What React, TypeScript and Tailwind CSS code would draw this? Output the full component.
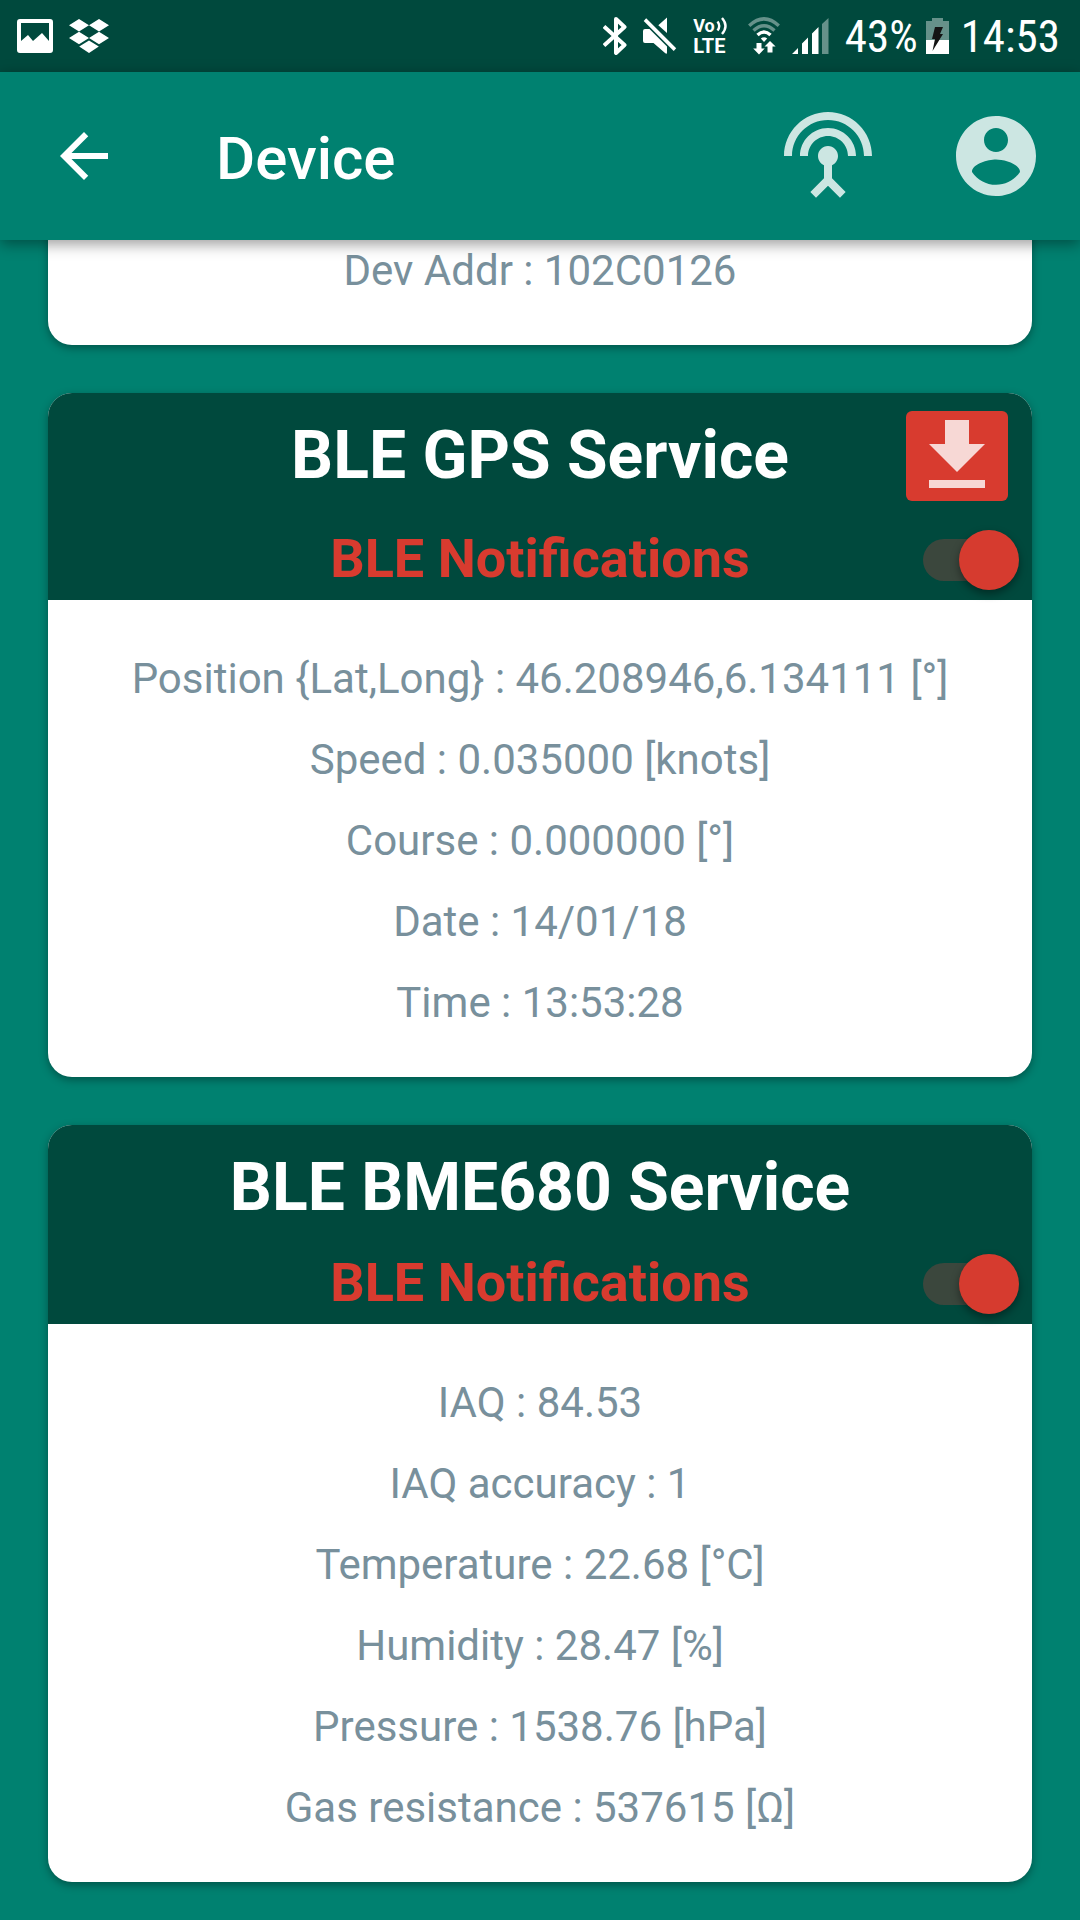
import type { ReactNode } from "react";

function PictureIcon() {
  return (
    <svg width="36" height="34" viewBox="0 0 36 34" aria-hidden="true">
      <path
        fill="#fff"
        fillRule="evenodd"
        d="M3 0h30a3 3 0 0 1 3 3v28a3 3 0 0 1-3 3H3a3 3 0 0 1-3-3V3a3 3 0 0 1 3-3zM4 4v18l7-6 5 6 9-8 7 8V4z"
      />
    </svg>
  );
}

function DropboxIcon() {
  return (
    <svg width="40" height="34" viewBox="0 0 40 34" aria-hidden="true">
      <path
        fill="#fff"
        d="M10 0l10 6.2-10 6.3L0 6.2zM30 0l10 6.2-10 6.3-10-6.3zM10 12.7l10 6.3-10 6.3L0 19zM30 12.7L40 19l-10 6.3L20 19zM20 21.4l9.8 6.2L20 34l-9.8-6.4z"
      />
    </svg>
  );
}

function BluetoothIcon() {
  return (
    <svg width="24" height="38" viewBox="0 0 24 38" aria-hidden="true">
      <path
        fill="none"
        stroke="#fff"
        strokeWidth="4"
        strokeLinejoin="round"
        d="M1 9.5L21.5 28 13 36V2l8.5 8L1 28.5"
      />
    </svg>
  );
}

function MuteIcon() {
  return (
    <svg width="34" height="38" viewBox="0 0 34 38" aria-hidden="true">
      <path
        fill="#fff"
        d="M2 12H6.500L24 29.500V35.500Q24 37.500 22.300 36.300L10.500 26H2Q0 26 0 24V14Q0 12 2 12zM24 0.500V16L15.300 8.200z"
      />
      <path fill="#fff" d="M3.200 1.200L33.200 31.200 30.700 34 0.700 4z" />
    </svg>
  );
}

function VoLte() {
  return (
    <div className="flex flex-col text-[20px] leading-[20px] font-bold">
      <div className="flex items-center gap-px text-[18px]">
        <span>Vo</span>
        <svg width="12" height="18" viewBox="0 0 12 18" aria-hidden="true">
          <path
            fill="none"
            stroke="#fff"
            strokeWidth="2.400"
            d="M1.500 4.500Q5 9 1.500 13.500M6 1Q13 9 6 17"
          />
        </svg>
      </div>
      <span>LTE</span>
    </div>
  );
}

function WifiIcon() {
  return (
    <svg width="32" height="38" viewBox="0 0 32 38" aria-hidden="true">
      <g fill="none" stroke="#fff" strokeWidth="3.400">
        <path opacity=".4" d="M1.200 8.800Q16-5 30.800 8.800" />
        <path opacity=".4" d="M5.500 13.500Q16 4 26.500 13.500" />
        <path d="M9.500 18Q16 12 22.500 18" />
      </g>
      <path
        fill="#fff"
        d="M12.800 21.500Q16 19 19.200 21.500L16 25zM8.500 26h5v5.500h3.200L11 37.500 5.200 31.500h3.300zM19.500 35.500V29.500H16.500L22 24l5.600 5.500H24.500v6z"
      />
    </svg>
  );
}

function SignalIcon() {
  return (
    <svg width="37" height="36" viewBox="0 0 37 36" aria-hidden="true">
      <path
        fill="#fff"
        d="M0 36l6-6v6zM10 25.500l6-6V36h-6zM20 15.500l6.500-6.500v27H20z"
      />
      <path fill="#fff" opacity=".4" d="M30 6l6.500-6v36H30z" />
    </svg>
  );
}

function BatteryIcon() {
  return (
    <svg width="23" height="36" viewBox="0 0 23 36" aria-hidden="true">
      <path fill="#fff" opacity=".4" d="M6 0h11v3h6v19H0V3h6z" />
      <path fill="#fff" d="M0 22h23v14H0z" />
      <path fill="#141414" d="M9 9h8l-3 7h3L6.500 33 9 21H6z" />
    </svg>
  );
}

function MaterialIcon({ path, className }: { path: string; className: string }) {
  return (
    <svg viewBox="0 0 24 24" className={className} fill="currentColor" aria-hidden="true">
      <path d={path} />
    </svg>
  );
}

const BACK = "M20 11H7.830l5.590-5.590L12 4l-8 8 8 8 1.410-1.410L7.830 13H20v-2z";
const ANTENNA =
  "M12 5c-3.870 0-7 3.130-7 7h2c0-2.760 2.240-5 5-5s5 2.240 5 5h2c0-3.870-3.130-7-7-7zm1 9.290c.88-.39 1.500-1.260 1.500-2.290 0-1.380-1.120-2.500-2.500-2.500S9.500 10.620 9.500 12c0 1.020.62 1.900 1.500 2.290v3.300L7.590 21 9 22.410l3-3 3 3L16.410 21 13 17.590v-3.300zM12 1C5.930 1 1 5.930 1 12h2c0-4.970 4.030-9 9-9s9 4.030 9 9h2c0-6.070-4.930-11-11-11z";
const ACCOUNT =
  "M12 2C6.480 2 2 6.480 2 12s4.480 10 10 10 10-4.480 10-10S17.520 2 12 2zm0 3c1.660 0 3 1.340 3 3s-1.340 3-3 3-3-1.340-3-3 1.340-3 3-3zm0 14.200c-2.500 0-4.710-1.280-6-3.220.03-1.990 4-3.080 6-3.080 1.990 0 5.970 1.090 6 3.080-1.290 1.940-3.500 3.220-6 3.220z";
const DOWNLOAD = "M19 9h-4V3H9v6H5l7 7 7-7zM5 18v2h14v-2H5z";

function StatusBar() {
  return (
    <div className="flex h-[72px] items-center justify-between bg-[#00493d] pr-5 pl-[17px] text-white">
      <div className="flex items-center gap-4">
        <PictureIcon />
        <DropboxIcon />
      </div>
      <div className="flex items-center">
        <div className="mr-4 flex items-center gap-4">
          <BluetoothIcon />
          <MuteIcon />
          <VoLte />
          <div className="ml-1 flex items-center gap-3">
            <WifiIcon />
            <SignalIcon />
          </div>
        </div>
        <span className="mr-2 pt-0.5 font-['Roboto_Condensed','Roboto',sans-serif] text-[45px]">43%</span>
        <BatteryIcon />
        <span className="ml-3 pt-0.5 font-['Roboto_Condensed','Roboto',sans-serif] text-[45px]">14:53</span>
      </div>
    </div>
  );
}

function AppBar() {
  return (
    <header className="relative z-10 flex h-[168px] items-center bg-[#008170] px-9 text-white shadow-[0_4px_14px_rgba(0,0,0,0.4)]">
      <button type="button" aria-label="Back" className="ml-3">
        <MaterialIcon path={BACK} className="size-[72px]" />
      </button>
      <h1 className="ml-24 flex-1 pt-1.5 text-[60px] leading-[72px] font-medium">Device</h1>
      <div className="flex gap-[72px] text-white/80">
        <button type="button" aria-label="Scan">
          <MaterialIcon path={ANTENNA} className="size-24" />
        </button>
        <button type="button" aria-label="Account">
          <MaterialIcon path={ACCOUNT} className="size-24" />
        </button>
      </div>
    </header>
  );
}

function Rows({ rows }: { rows: string[] }) {
  return (
    <ul className="text-center text-[42px] leading-[81px] text-[#78909c]">
      {rows.map((row) => (
        <li key={row}>{row}</li>
      ))}
    </ul>
  );
}

function ServiceCard({ id, title, rows, action }: { id: string; title: string; rows: string[]; action?: ReactNode }) {
  return (
    <section className="overflow-hidden rounded-3xl bg-white shadow-[0_3px_8px_rgba(0,0,0,0.35)]">
      <div className="bg-[#00493d]">
        <div className="grid grid-cols-[126px_1fr_126px] items-start">
          <h2 className="col-start-2 pt-6 pb-4 text-center text-[66px] leading-[78px] font-bold text-white">{title}</h2>
          {action}
        </div>
        <div className="grid h-[81px] grid-cols-[126px_1fr_126px] items-center">
          <label htmlFor={id} className="col-start-2 pb-0.5 text-center text-[54px] leading-[64px] font-bold text-[#d83b2f]">
            BLE Notifications
          </label>
          <input
            id={id}
            type="checkbox"
            role="switch"
            defaultChecked
            className="relative mr-[13px] h-[60px] w-24 appearance-none justify-self-end before:absolute before:top-[9px] before:left-0 before:h-[42px] before:w-[72px] before:rounded-full before:bg-[#3b473d] after:absolute after:top-0 after:left-0 after:size-[60px] after:rounded-full after:bg-[#b0bec5] after:shadow-[0_4px_8px_rgba(0,0,0,0.4)] checked:after:left-9 checked:after:bg-[#d63b2f]"
          />
        </div>
      </div>
      <div className="pt-[38px] pb-[34px]">
        <Rows rows={rows} />
      </div>
    </section>
  );
}

const GPS_ROWS = [
  "Position {Lat,Long} : 46.208946,6.134111 [°]",
  "Speed : 0.035000 [knots]",
  "Course : 0.000000 [°]",
  "Date : 14/01/18",
  "Time : 13:53:28",
];

const BME_ROWS = [
  "IAQ : 84.53",
  "IAQ accuracy : 1",
  "Temperature : 22.68 [°C]",
  "Humidity : 28.47 [%]",
  "Pressure : 1538.76 [hPa]",
  "Gas resistance : 537615 [Ω]",
];

export default function App() {
  return (
    <div className="min-h-screen bg-[#008170] font-['Roboto',sans-serif]">
      <StatusBar />
      <AppBar />
      <main className="-mt-[10px] flex flex-col gap-12 px-12">
        <section className="rounded-b-3xl bg-white pb-[34px] shadow-[0_3px_8px_rgba(0,0,0,0.35)]">
          <Rows rows={["Dev Addr : 102C0126"]} />
        </section>
        <ServiceCard
          id="gps-notifications"
          title="BLE GPS Service"
          rows={GPS_ROWS}
          action={
            <button
              type="button"
              aria-label="Download"
              className="my-[18px] mr-6 flex h-[90px] w-[102px] items-center justify-center rounded-md bg-[#d83b2f] text-white/80"
            >
              <MaterialIcon path={DOWNLOAD} className="size-24 shrink-0" />
            </button>
          }
        />
        <ServiceCard id="bme-notifications" title="BLE BME680 Service" rows={BME_ROWS} />
      </main>
    </div>
  );
}
